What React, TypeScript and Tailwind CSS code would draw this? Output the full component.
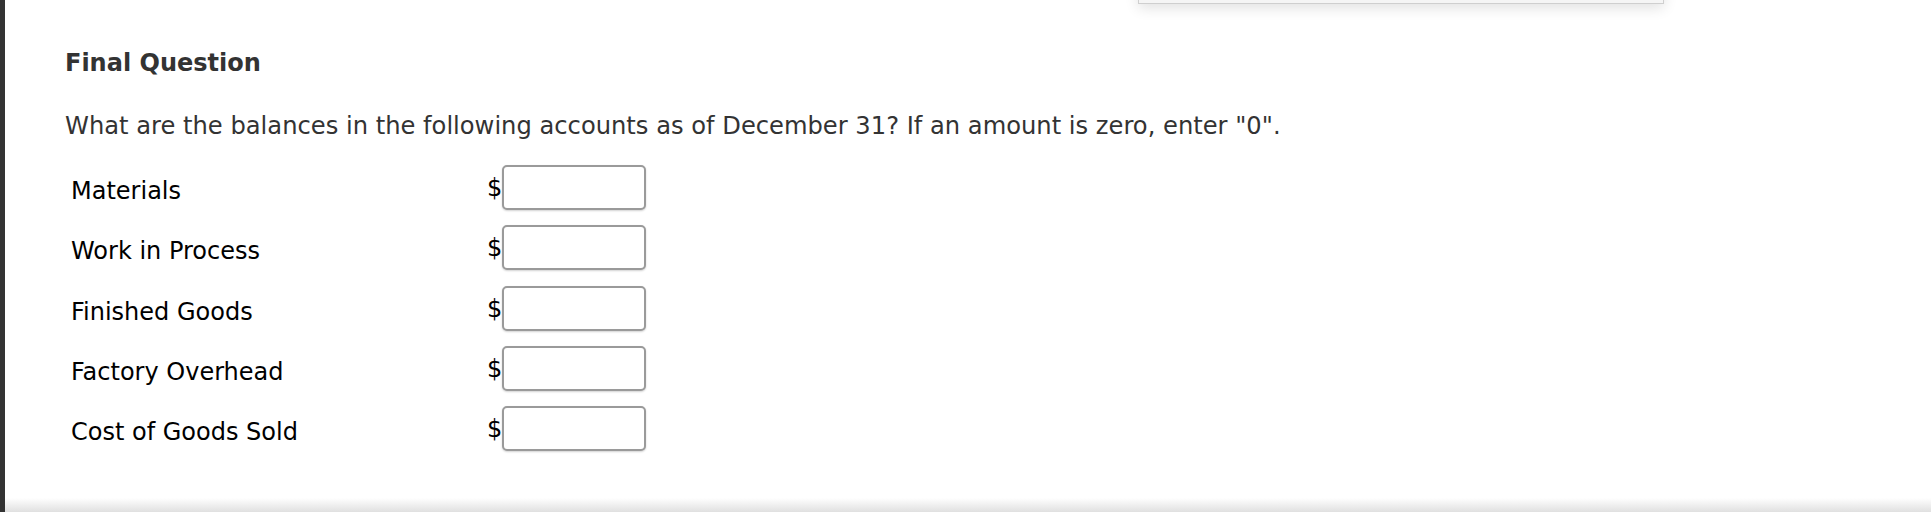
const accounts = ["Materials", "Work in Process", "Finished Goods", "Factory Overhead", "Cost of Goods Sold"];

function AmountRow(props: { label: string }) {
  return (
    <div className="flex items-center">
      <div className="w-[422px] pl-[6px] pt-[8px] text-black">{props.label}</div>
      <span className="text-black pt-[2px]">$</span>
      <input
        type="text"
        aria-label={props.label}
        className="h-[45px] w-[144px] rounded-[5px] border-2 border-[#9a9a9a] bg-white shadow-[0_1px_2px_rgba(0,0,0,0.18)] outline-none"
      />
    </div>
  );
}

export default function App() {
  return (
    <div className="relative flex h-[512px] w-full flex-col overflow-hidden border-l-[5px] border-[#333] bg-white font-['DejaVu_Sans',sans-serif] text-[24px] leading-[29px]">
      {/* edge of a floating panel scrolled off the top */}
      <div className="absolute left-[1133px] top-[-20px] h-[24px] w-[526px] border border-[#cfcfcf] bg-[#f5f5f5] shadow-[0_4px_14px_rgba(0,0,0,0.12)]" />

      <div className="flex-1 pl-[60px] pt-[49px]">
        <h2 className="font-bold text-[#333]">Final Question</h2>
        <p className="mt-[34px] text-[24.2px] text-[#333]">
          What are the balances in the following accounts as of December 31? If an amount is zero, enter "0".
        </p>
        <div className="mt-[24px] flex flex-col gap-[15.3px]">
          {accounts.map((a) => (
            <AmountRow key={a} label={a} />
          ))}
        </div>
      </div>

      <div className="h-[14px] bg-gradient-to-b from-white to-[#e0e0e0]" />
    </div>
  );
}
